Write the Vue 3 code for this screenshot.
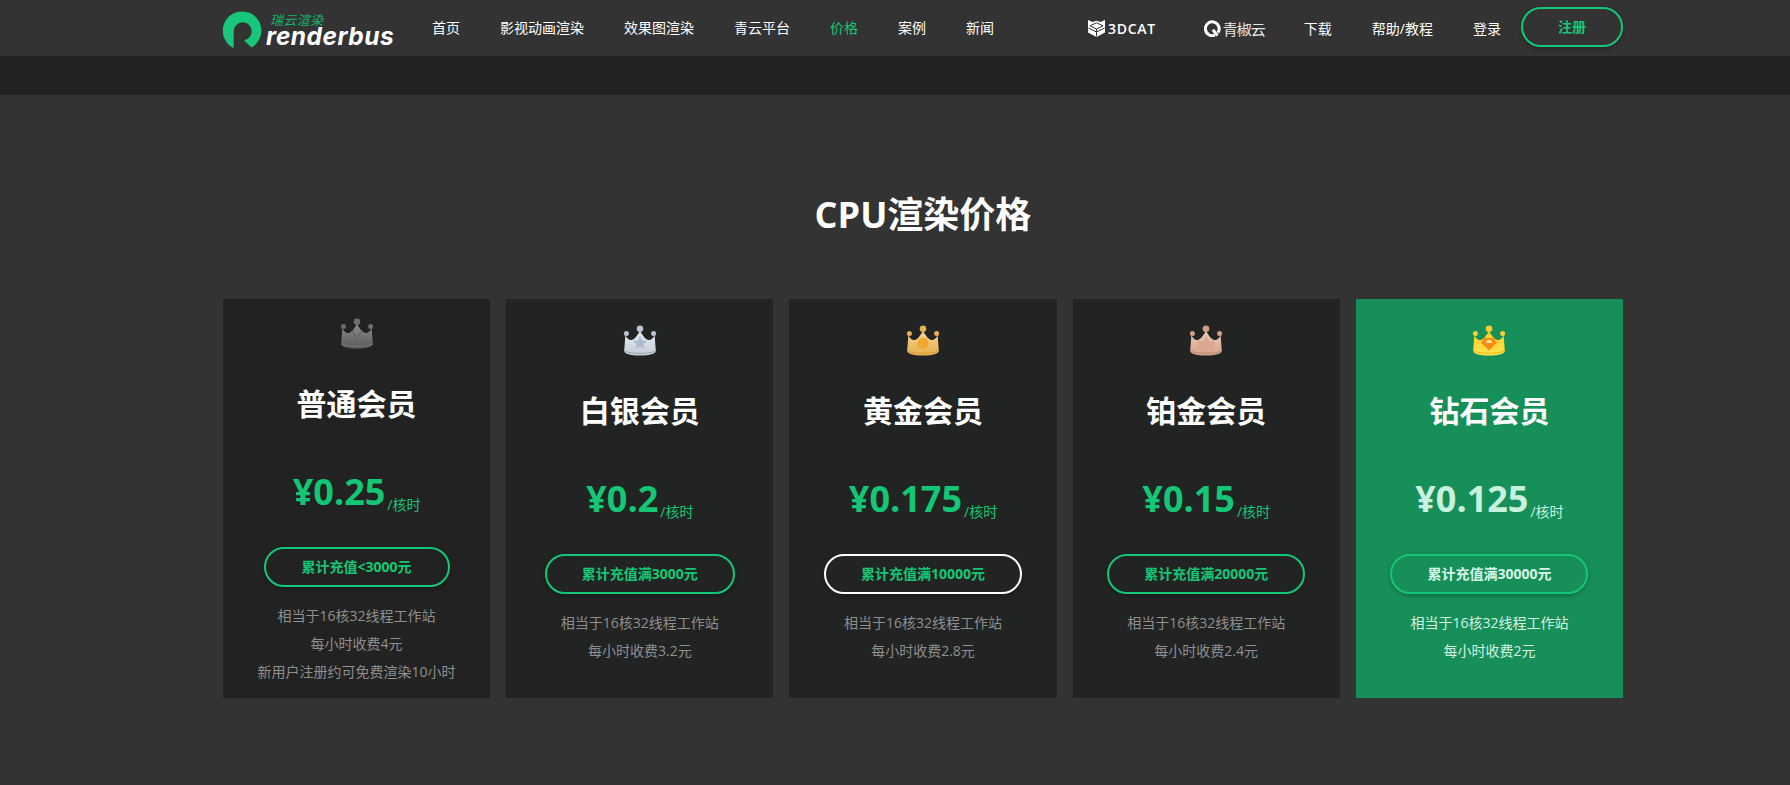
<script setup>
const nav = [
  { t: '首页' }, { t: '影视动画渲染' }, { t: '效果图渲染' }, { t: '青云平台' },
  { t: '价格', on: true }, { t: '案例' }, { t: '新闻' },
]
const plans = [
  { id: 'v', name: '普通会员', price: '¥0.25', btn: '累计充值<3000元', lines: ['相当于16核32线程工作站', '每小时收费4元', '新用户注册约可免费渲染10小时'], c1: '#8c8c8c', c2: '#5a5a5a', c3: '#6a6a6a', rim: '#777777', ball: '#6e6e6e', tight: true },
  { id: 's', name: '白银会员', price: '¥0.2', btn: '累计充值满3000元', lines: ['相当于16核32线程工作站', '每小时收费3.2元'], c1: '#e8ecf2', c2: '#c4ccd8', c3: '#a9bccf', rim: '#97a6ba', ball: '#b9c4d3' },
  { id: 'g', name: '黄金会员', price: '¥0.175', btn: '累计充值满10000元', lines: ['相当于16核32线程工作站', '每小时收费2.8元'], c1: '#f6d68e', c2: '#e6ae50', c3: '#f0a832', rim: '#d59c3e', ball: '#e8ae52', white: true },
  { id: 'p', name: '铂金会员', price: '¥0.15', btn: '累计充值满20000元', lines: ['相当于16核32线程工作站', '每小时收费2.4元'], c1: '#efcdbb', c2: '#d3a188', c3: '#dba78e', rim: '#b98a72', ball: '#d49f85' },
  { id: 'd', name: '钻石会员', price: '¥0.125', btn: '累计充值满30000元', lines: ['相当于16核32线程工作站', '每小时收费2元'], c1: '#fbc81e', c2: '#ffe54f', c3: '#f78b12', rim: '#eeb815', ball: '#f9cd2e', top: true },
]
</script>

<template>
  <div class="page">
    <header class="head">
      <div class="wrap head-in">
        <a class="logo">
          <svg class="mark" width="40" height="38" viewBox="2 2 40 38">
            <path d="M12.500 39A19.300 19.300 0 1 1 30.500 38.500L23 31.200A9 9 0 1 0 12.700 22L12.700 39Z" fill="#18c77a"/>
          </svg>
          <span class="logo-txt">
            <span class="logo-cn">瑞云渲染</span>
            <span class="logo-en">renderbus</span>
          </span>
        </a>
        <nav class="nav">
          <a v-for="n in nav" :key="n.t" :class="{ on: n.on }">{{ n.t }}</a>
        </nav>
        <div class="right">
          <a class="cat">
            <svg width="17" height="17" viewBox="0 0 17 17">
              <path d="M0 0L4.500 2L8.500 .8L12.500 2L17 0V12.500L8.500 17L0 12.500Z" fill="#fff"/>
              <path d="M2 5.800L8.500 2.800L15 5.800L8.500 9ZM8.500 9V16.500M.5 8L8.500 12L16.500 8" fill="none" stroke="#333" stroke-width="1"/>
            </svg>
            <span>3DCAT</span>
          </a>
          <a class="qing">
            <svg width="17" height="17" viewBox="0 0 17 17">
              <path d="M10.800 15.200A6.900 6.900 0 1 1 14 12.600" fill="none" stroke="#fff" stroke-width="3"/>
              <path d="M8.800 9.800L13.500 15.500" fill="none" stroke="#fff" stroke-width="3"/>
            </svg>
            <span>青椒云</span>
          </a>
          <a class="r1">下载</a>
          <a class="r2">帮助/教程</a>
          <a class="r3">登录</a>
          <a class="reg">注册</a>
        </div>
      </div>
    </header>
    <div class="band"></div>
    <main class="main">
      <h1 class="wrap title">CPU渲染价格</h1>
      <div class="wrap cards">
        <article v-for="p in plans" :key="p.id" class="card" :class="{ top: p.top, tight: p.tight }">
          <svg class="crown" width="34" height="31" viewBox="0 0 34 31">
            <defs>
              <linearGradient :id="'g' + p.id" x1="0" y1="0" x2="0" y2="1">
                <stop offset="0" :stop-color="p.c1"/>
                <stop offset="1" :stop-color="p.c2"/>
              </linearGradient>
            </defs>
            <circle cx="17" cy="3.800" r="3.300" :fill="p.ball"/>
            <circle cx="3.400" cy="8.500" r="2.500" :fill="p.ball"/>
            <circle cx="30.600" cy="8.500" r="2.500" :fill="p.ball"/>
            <path d="M2.400 10C4 14 6.500 15.500 8.800 15C12 14 15 9.500 17 6C19 9.500 22 14 25.200 15C27.500 15.500 30 14 31.600 10L32.800 25.500C33 29 27 30.500 17 30.500S1 29 1.200 25.500Z" :fill="'url(#g' + p.id + ')'"/>
            <path d="M1.500 26.200C5.500 27.800 10.500 28.300 17 28.300S28.500 27.800 32.500 26.200" fill="none" :stroke="p.rim" stroke-width="1"/>
            <path v-if="p.id === 'v'" d="M11 12.500L17 23L23 12.500L19.800 14L17 18.500L14.200 14Z" :fill="p.c3"/>
            <path v-if="p.id === 's'" d="M17 10.500L19 15.500L24 16L20.300 19.300L21.400 24L17 21.500L12.600 24L13.700 19.300L10 16L15 15.500Z" :fill="p.c3"/>
            <circle v-if="p.id === 'g'" cx="17" cy="18.500" r="5.700" :fill="p.c3"/>
            <path v-if="p.id === 'p'" d="M9 14.500L13 17.500L17 11L21 17.500L25 14.500V24.500H9Z" :fill="p.c3"/>
            <path v-if="p.id === 'd'" d="M12.500 13H21.500L25 17.500L17 25.500L9 17.500Z" :fill="p.c3"/>
            <path v-if="p.id === 'd'" d="M15 15H19L20.500 18H13.500Z" fill="#ffe3a0"/>
          </svg>
          <h2 class="name">{{ p.name }}</h2>
          <div class="price"><b>{{ p.price }}</b><span>/核时</span></div>
          <a class="btn" :class="{ white: p.white }">{{ p.btn }}</a>
          <p v-for="l in p.lines" :key="l" class="line">{{ l }}</p>
        </article>
      </div>
    </main>
  </div>
</template>

<style scoped>
.page {
  min-height: 785px;
  background: #333333;
  font-family: "Open Sans", "Noto Sans CJK SC", sans-serif;
  color: #fff;
  overflow: hidden;
}
.wrap { width: 1400px; margin-left: 223px; }
.head { height: 56px; background: #333333; }
.head-in { height: 56px; display: flex; align-items: center; font-size: 14px; }
.logo { display: flex; align-items: center; width: 169px; flex: none; }
.mark { flex: none; margin-top: 3px; }
.logo-txt { display: flex; flex-direction: column; margin-left: 3px; margin-top: 2px; font-style: italic; white-space: nowrap; }
.logo-cn { font-size: 13px; line-height: 13px; color: #16b06c; margin-left: 4px; letter-spacing: .4px; }
.logo-en { font-family: "Inter", sans-serif; font-size: 24.5px; line-height: 18px; font-weight: 700; letter-spacing: .5px; color: #fff; }
.nav { display: flex; gap: 40px; margin-left: 40px; }
.nav a { color: #fff; line-height: 20px; }
.nav a.on { color: #14c775; }
.right { display: flex; align-items: center; margin-left: auto; }
.cat { display: flex; align-items: center; gap: 3px; font-size: 14px; font-weight: 600; letter-spacing: .7px; }
.qing { display: flex; align-items: center; gap: 2px; margin-left: 48px; font-size: 15px; letter-spacing: -1px; color: #e6e6e6; }
.r1 { margin-left: 39px; }
.r2 { margin-left: 40px; }
.r3 { margin-left: 40px; }
.reg {
  margin-left: 20px;
  margin-bottom: 2px;
  width: 102px;
  height: 40px;
  box-sizing: border-box;
  border: 2px solid #14c775;
  border-radius: 20px;
  color: #14c775;
  font-weight: 700;
  text-align: center;
  line-height: 36px;
  box-shadow: 0 2px 4px rgba(0,0,0,.25);
}
.band { height: 39px; background: #222222; }
.title {
  margin-top: 96px;
  margin-bottom: 0;
  font-size: 36px;
  line-height: 48px;
  font-weight: 700;
  text-align: center;
}
.cards { display: flex; gap: 16px; margin-top: 60px; }
.card {
  flex: 1;
  height: 399px;
  box-sizing: border-box;
  background: #222424;
  display: flex;
  flex-direction: column;
  align-items: center;
  padding-top: 26px;
}
.card:first-child { background: #222222; }
.card.top { background: #178f59; }
.card.tight { padding-top: 19px; }
.crown { flex: none; }
.name { margin: 35px 0 0; font-size: 30px; line-height: 40px; font-weight: 700; }
.price { display: flex; align-items: baseline; margin-top: 41px; height: 52px; color: #14c775; }
.price b { font-size: 36px; line-height: 54px; font-weight: 700; }
.price span { font-size: 14px; position: relative; top: 5px; margin-left: 2px; }
.top .price { color: #c8f1de; }
.btn {
  margin-top: 30px;
  padding: 0 35px;
  height: 40px;
  min-width: 186px;
  box-sizing: border-box;
  border: 2px solid #14c775;
  border-radius: 20px;
  color: #14c775;
  font-size: 14px;
  font-weight: 700;
  line-height: 36px;
  text-align: center;
  white-space: nowrap;
  box-shadow: 0 2px 4px rgba(0,0,0,.25);
}
.btn.white { border-color: #fff; }
.top .btn { color: #d6f5e6; }
.line { margin: 0; font-size: 14px; line-height: 28px; color: #8f8f8f; }
.btn + .line { margin-top: 15px; }
.top .line { color: #d5f2e4; }
</style>
